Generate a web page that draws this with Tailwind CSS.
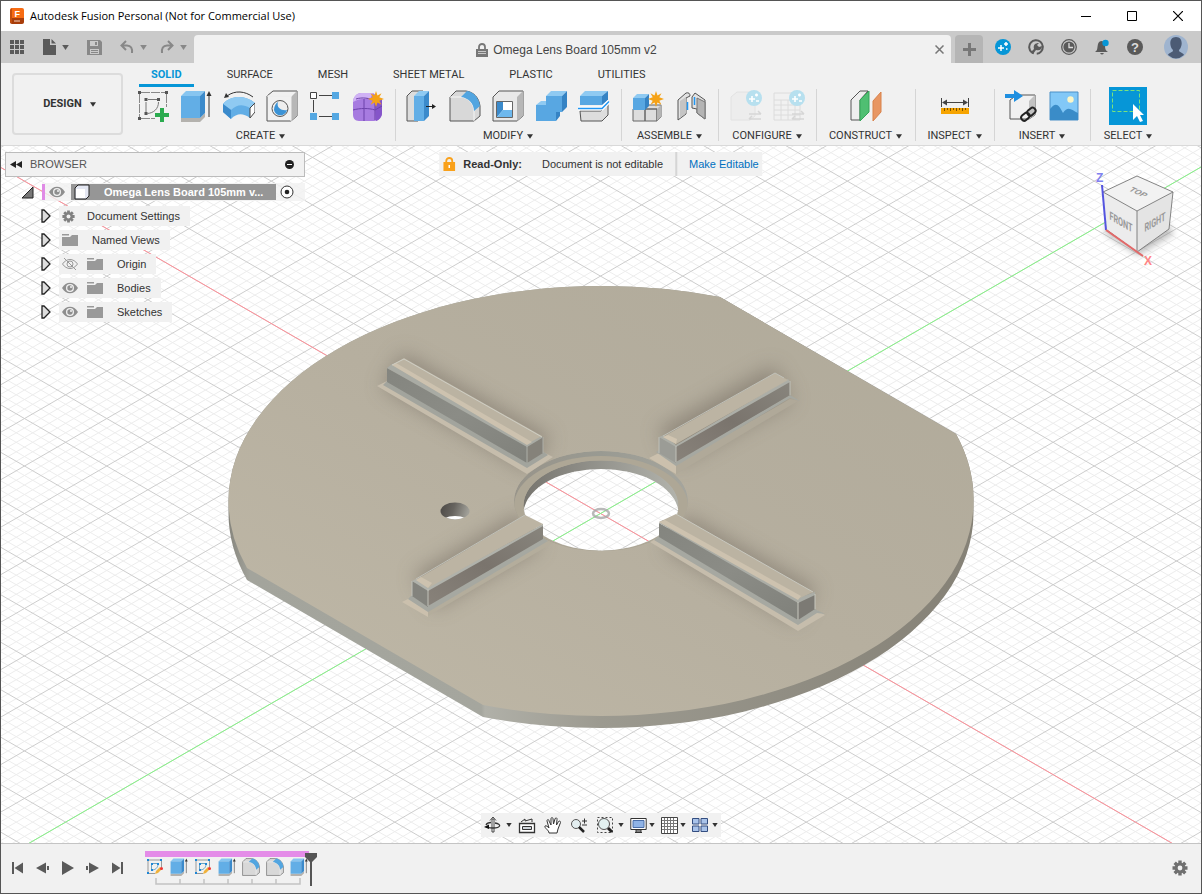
<!DOCTYPE html>
<html lang="en">
<head>
    <meta charset="UTF-8">
    <meta name="viewport" content="width=device-width, initial-scale=1.0">
    <title>Autodesk Fusion Personal (Not for Commercial Use)</title>
    <script src="https://cdn.jsdelivr.net/npm/@tailwindcss/browser@4"></script>
    <style>
        body { font-family: 'Liberation Sans', Arial, sans-serif; }
    </style>
</head>
<body class="h-screen flex flex-col overflow-hidden border border-[#555] bg-[#f1f1f1] text-[11px] text-[#333]">

    <!-- Shared icons -->
    <svg class="hidden">
        <defs>
            <linearGradient id="gBox" x1="0" y1="0" x2="1" y2="1"><stop offset="0" stop-color="#f4f4f4"/><stop offset="1" stop-color="#bdbdbd"/></linearGradient>
            <symbol id="caret" viewBox="0 0 8 6"><path d="M0 0h8L4 6z" fill="currentColor"/></symbol>
            <symbol id="star" viewBox="0 0 16 16"><path d="M8 0l1.500 4.500 4-2.200-2.200 4L16 8l-4.700 1.700 2.200 4-4-2.200L8 16l-1.500-4.500-4 2.200 2.200-4L0 8l4.700-1.700-2.200-4 4 2.200z" fill="#f5a216"/></symbol>
            <symbol id="extrude" viewBox="0 0 32 32">
                <path d="M1 28h19l5-5v4l-5 5H1z" fill="#b4b2ae"/>
                <path d="M1 6l5-5h19l-5 5z" fill="#87c5f0"/><path d="M1 6h19v22H1z" fill="#62aee6"/><path d="M20 6l5-5v22l-5 5z" fill="#3b8acb"/>
                <path d="M29 27V4" stroke="#333"/><path d="M26.500 6L29 1l2.500 5z" fill="#333"/>
            </symbol>
            <symbol id="sketch" viewBox="0 0 32 32">
                <path d="M2.500 4v23M4 2.500h24M4 28.500h14M29.500 4v13" stroke="#888" stroke-dasharray="9 1" fill="none"/>
                <path d="M9 12v11M11 9.500h9M21.500 12c0 7-5 11-11 11.500" stroke="#777" fill="none"/>
                <path d="M1 1h3v3H1zM28 1h3v3h-3zM1 27h3v3H1zM7.500 8h3v3h-3zM20 8h3v3h-3zM7.500 22h3v3h-3z" fill="#555"/>
            </symbol>
            <symbol id="fillet" viewBox="0 0 32 32">
                <path d="M1 7l6-6h10c8 1 13 7 14 15v10l-6 5H1z" fill="#d8d8d8" stroke="#555"/>
                <path d="M1 7h11c8 1 13 7 13 15v9" fill="none" stroke="#f6f6f6"/>
                <path d="M12 7l6-6c7 1 12 7 13 15l-6 5c0-7-5-13-13-14z" fill="#52a5e0"/>
            </symbol>
            <symbol id="eye" viewBox="0 0 16 12"><path d="M0 6c4-7 12-7 16 0-4 7-12 7-16 0z" fill="#8e8e8e"/><circle cx="8" cy="6" r="4" fill="#f1f1f1"/><circle cx="8" cy="6" r="2.700" fill="#8e8e8e"/><circle cx="9" cy="5" r="1" fill="#f1f1f1"/></symbol>
            <symbol id="folder" viewBox="0 0 16 14"><path d="M0 1h7v1.500H0zM0 4h8l2-2h6v11H0z" fill="#999"/></symbol>
            <symbol id="twisty" viewBox="0 0 10 14"><path d="M1 1h2l6 6-6 6H1z" fill="#ddd" stroke="#222" stroke-width="1.300"/></symbol>
            <symbol id="gear" viewBox="0 0 16 16"><g stroke="currentColor" stroke-width="3.400"><path d="M8 .5v15M.5 8h15M2.700 2.700l10.600 10.600M13.300 2.700L2.700 13.300"/></g><circle cx="8" cy="8" r="5.400" fill="currentColor"/><circle cx="8" cy="8" r="2.400" fill="#f1f1f1"/></symbol>
            <symbol id="table" viewBox="0 0 32 32">
                <path d="M1 3h26v27H1zM1 10h26M1 15h26M1 20h26M1 25h26M8 10v20M15 10v20M22 10v20" fill="none" stroke="#dcdcdc"/>
            </symbol>
            <symbol id="config" viewBox="0 0 32 32"><circle cx="24" cy="8" r="8" fill="#b7e0ef"/><path d="M19 9h6M22 6v6M25 5h3M26.500 3.500v3M26 11h3" stroke="#fff" stroke-width="1.600"/><path d="M19 24h12m-3-3l3 3M31 29H19m3-3l-3 3" stroke="#d6d6d6" fill="none" stroke-width="1.500"/></symbol>
            <symbol id="skSmall" viewBox="0 0 18 18"><path d="M3 2h12M2 3v12M3 15.500h6M15.500 3v6" stroke="#999"/><path d="M5.500 6v6M6 5.500h6M12 6c0 4-3 6-6 6" fill="none" stroke="#6aa3c4"/><path d="M1 1h2v2H1zM14 1h2v2h-2zM1 14h2v2H1zM5 5h2v2H5zM11 5h2v2h-2zM5 11h2v2H5z" fill="#1d86d6"/><path d="M9 16l1-3 4-4 2 2-4 4z" fill="#f0b23c"/><circle cx="15.500" cy="10.500" r="1.500" fill="#e33"/></symbol>
        </defs>
    </svg>

    <!-- Title bar -->
    <header class="flex h-[30px] shrink-0 items-center bg-white pl-2 text-black">
        <svg class="size-4" viewBox="0 0 16 16"><rect x="1" width="14" height="15" rx="2" fill="#f76b12"/><path d="M1 10h14v4q0 2-2 2H3q-2 0-2-2z" fill="#a83d0a"/><path d="M1 2l2-2v15l-2-1z" fill="#c44e0c"/><text x="5.500" y="9" font-size="9" font-weight="bold" fill="#fff">F</text><path d="M5 13h6" stroke="#f3d5c2"/></svg>
        <h1 class="ml-[5px] flex-1 font-['Open_Sans'] text-[11px]">Autodesk Fusion Personal (Not for Commercial Use)</h1>
        <button class="flex h-full w-[46px] items-center justify-center" aria-label="Minimize"><svg class="size-[10px]" viewBox="0 0 10 10"><path d="M0 5.500h10" stroke="#000"/></svg></button>
        <button class="flex h-full w-[46px] items-center justify-center" aria-label="Maximize"><svg class="size-[10px]" viewBox="0 0 10 10"><path d="M.5.5h9v9h-9z" fill="none" stroke="#000"/></svg></button>
        <button class="flex h-full w-[46px] items-center justify-center" aria-label="Close"><svg class="size-[10px]" viewBox="0 0 10 10"><path d="M0 0l10 10M10 0L0 10" stroke="#000" stroke-width="1.200"/></svg></button>
    </header>

    <!-- Quick access and document tab -->
    <div class="flex h-8 shrink-0 items-end bg-[#cacaca] text-[#5a5a5a]">
        <div class="flex h-full w-[193px] items-center pl-[9px]">
            <button aria-label="Data panel"><svg class="size-[14px]" viewBox="0 0 14 14"><path d="M0 0h4v4H0zM5 0h4v4H5zM10 0h4v4h-4zM0 5h4v4H0zM5 5h4v4H5zM10 5h4v4h-4zM0 10h4v4H0zM5 10h4v4H5zM10 10h4v4h-4z" fill="currentColor"/></svg></button>
            <button class="ml-[18px] flex items-center gap-1.5" aria-label="File"><svg class="h-4 w-[14px]" viewBox="0 0 14 16"><path d="M1 0h7v6h6v10H1zM9.500 0L14 4.500H9.500z" fill="currentColor"/></svg><svg class="h-[5px] w-[7px]"><use href="#caret"/></svg></button>
            <button class="ml-[18px] text-[#888]" aria-label="Save"><svg class="size-[15px]" viewBox="0 0 15 15"><path d="M0 0h13l2 2v13H0z" fill="currentColor"/><path d="M3 1h8v5H3zM3 9h9v5H3z" fill="#cacaca"/><path d="M8 2h2v3H8zM4 10h7v1H4zM4 12h7v1H4z" fill="currentColor"/></svg></button>
            <button class="ml-[18px] flex items-center gap-1.5 text-[#888]" aria-label="Undo"><svg class="h-[14px] w-[14px]" viewBox="0 0 14 14"><path d="M2 5.500h5c4 0 5.500 3 5 7.500M6 1L1.500 5.500 6 10" fill="none" stroke="currentColor" stroke-width="2"/></svg><svg class="h-[5px] w-[7px]"><use href="#caret"/></svg></button>
            <button class="ml-[13px] flex items-center gap-1.5 text-[#888]" aria-label="Redo"><svg class="h-[14px] w-[14px]" viewBox="0 0 14 14"><path d="M12 5.500H7c-4 0-5.500 3-5 7.500M8 1l4.500 4.500L8 10" fill="none" stroke="currentColor" stroke-width="2"/></svg><svg class="h-[5px] w-[7px]"><use href="#caret"/></svg></button>
        </div>
        <div class="flex h-7 flex-1 items-center rounded-t bg-[#f1f1f1] pl-1 pt-px text-[#444]">
            <div class="flex flex-1 items-center justify-center gap-[5px] text-[12px]">
                <svg class="h-[14px] w-3" viewBox="0 0 12 14"><path d="M3 6V4c0-4 6-4 6 0v2" fill="none" stroke="#777" stroke-width="1.800"/><path d="M0 6h12v8H0z" fill="#777"/><path d="M2 8.500h8M2 10.500h8" stroke="#ddd" stroke-width=".8"/></svg>
                <span>Omega Lens Board 105mm v2</span>
            </div>
            <button class="mr-[7px]" aria-label="Close document"><svg class="size-[9px]" viewBox="0 0 9 9"><path d="M.5.5l8 8M8.500.5l-8 8" stroke="#777" stroke-width="1.500"/></svg></button>
        </div>
        <button class="ml-1 flex h-7 w-7 items-center justify-center rounded-t bg-[#b5b5b5]" aria-label="New tab"><svg class="size-[13px]" viewBox="0 0 13 13"><path d="M6.500 0v13M0 6.500h13" stroke="#777" stroke-width="3"/></svg></button>
        <div class="flex h-full items-center gap-[17px] pl-3 pr-[13px]">
            <button aria-label="Extensions"><svg class="size-4" viewBox="0 0 16 16"><circle cx="8" cy="8" r="8" fill="#0696d7"/><path d="M3 9h6M6 6v6M9 5h4M11 3v4M11 10h1.500" stroke="#fff" stroke-width="1.500"/></svg></button>
            <button aria-label="Job status"><svg class="size-4" viewBox="0 0 16 16"><circle cx="8" cy="8" r="6.800" fill="none" stroke="currentColor" stroke-width="2" stroke-dasharray="37 3" transform="rotate(130 8 8)"/><path d="M3 13l3-3c-1-4 1-6 5-6L9 6l2 2 3-1c0 4-3 5-6 4l-3 4z" fill="currentColor"/></svg></button>
            <button aria-label="Updates"><svg class="size-4" viewBox="0 0 16 16"><circle cx="8" cy="8" r="7.300" fill="none" stroke="currentColor" stroke-width="1.300"/><circle cx="8" cy="8" r="5.600" fill="currentColor"/><path d="M8 4v4.500h4" fill="none" stroke="#ddd" stroke-width="1.300"/></svg></button>
            <button aria-label="Notifications"><svg class="size-4" viewBox="0 0 16 16"><path d="M1 13c3-2 2-4 3-8 1-4 6-4 7 0 0 4 0 6 3 8zM6 14h4q-2 3-4 0z" fill="currentColor"/><circle cx="11.500" cy="4" r="3.200" fill="#0696d7"/></svg></button>
            <button aria-label="Help"><svg class="size-4" viewBox="0 0 16 16"><circle cx="8" cy="8" r="8" fill="currentColor"/><text x="8" y="12.500" text-anchor="middle" font-size="13" font-weight="bold" fill="#ddd">?</text></svg></button>
            <button class="ml-1" aria-label="Account"><svg class="size-6" viewBox="0 0 24 24"><circle cx="12" cy="12" r="12" fill="#9fb4cf"/><path d="M4 20c1-3 5-2 5-5-4-4-4-13 3-13s7 9 3 13c0 3 4 2 5 5q-8 7-16 0z" fill="#4c5b74"/></svg></button>
        </div>
    </div>

    <!-- Ribbon -->
    <div class="flex h-[83px] shrink-0 border-b border-[#d9d9d9] font-['Roboto'] text-[11px]">
        <button class="ml-[11px] mt-[10px] flex h-[62px] w-[111px] items-center justify-center gap-2 rounded border-2 border-[#dcdcdc] pl-1 font-bold">DESIGN <svg class="h-[5px] w-1.5"><use href="#caret"/></svg></button>
        <div class="ml-[10px] flex-1">
            <nav class="flex h-6 gap-[21px] pl-[6px]">
                <button class="border-b-[3px] border-[#0696d7] px-3 pt-[3px] font-bold text-[#0696d7]">SOLID</button>
                <button class="border-b-[3px] border-transparent px-3 pt-[3px]">SURFACE</button>
                <button class="border-b-[3px] border-transparent px-3 pt-[3px]">MESH</button>
                <button class="border-b-[3px] border-transparent px-3 pt-[3px]">SHEET METAL</button>
                <button class="border-b-[3px] border-transparent px-3 pt-[3px]">PLASTIC</button>
                <button class="border-b-[3px] border-transparent px-3 pt-[3px]">UTILITIES</button>
            </nav>
            <div class="flex">
                <section class="w-[262px]">
                    <div class="flex h-[38px] items-center justify-center gap-[11px] pr-[7px]">
                        <button aria-label="Create sketch"><svg class="size-8" viewBox="0 0 32 32"><use href="#sketch"/><path d="M23 18h4v5h5v4h-5v5h-4v-5h-5v-4h5z" fill="#2bab4f"/></svg></button>
                        <button aria-label="Extrude"><svg class="size-8"><use href="#extrude"/></svg></button>
                        <button aria-label="Revolve"><svg class="size-8" viewBox="0 0 32 32"><path d="M0 14c8-9 22-9 32-1l-5 6v9c-7-5-13-5-19 1l-8-7z" fill="#62aee6"/><path d="M0 14c8-9 22-9 32-1l-5 5c-7-4-13-4-19 2z" fill="#8fcaf2"/><path d="M8 20v9l-8-7v-8z" fill="#3b8acb"/><path d="M27 18l5-5v9l-5 6z" fill="#fff" stroke="#444"/><path d="M4 6c8-6 18-5 26 1" fill="none" stroke="#333"/><path d="M1 8l2-5 3 4z" fill="#333"/></svg></button>
                        <button aria-label="Hole"><svg class="size-8" viewBox="0 0 32 32"><path d="M1 6l6-5h24v25l-6 5H1z" fill="url(#gBox)" stroke="#555"/><path d="M25 7l6-6v25l-6 5z" fill="#b7b7b7"/><path d="M1 6h24v25" fill="none" stroke="#eee"/><circle cx="14" cy="18.500" r="8" fill="#eee" stroke="#555"/><path d="M12 12c-2 6 4 9 9 8-1 6-11 8-13 0 0-4 2-7 4-8z" fill="#3b93d6"/></svg></button>
                        <button aria-label="Rectangular pattern"><svg class="size-8" viewBox="0 0 32 32"><path d="M10 5.500h13M4.500 10v12M10 26.500h13" stroke="#444"/><path d="M1.500 2.500h6v6h-6z" fill="#fff" stroke="#444"/><path d="M23 2h7v7h-7zM1 23h7v7H1zM23 23h7v7h-7z" fill="#55a8e2"/></svg></button>
                        <button aria-label="Create form"><svg class="size-8" viewBox="0 0 32 32"><path d="M1 12c0-5 4-9 8-9h12l9 7v13c0 4-4 8-8 8H7c-4 0-6-3-6-6z" fill="#a77be0"/><path d="M1 12c0-5 4-9 8-9h12l-3 6c-6-1-13 0-17 3z" fill="#d0b2f5"/><path d="M23 12l7-3v14c0 3-2 7-6 8z" fill="#8555c9"/><path d="M1 20c7-2 16-2 22 0l7-4M12 9v22M23 11v19M4 9c6-2 14-1 19 2" fill="none" stroke="#6d42ab"/><use href="#star" x="16" y="1" width="16" height="16"/></svg></button>
                    </div>
                    <button class="flex h-[21px] w-full items-center justify-center gap-1 pr-[7px] pt-px">CREATE <svg class="h-[5px] w-1.5"><use href="#caret"/></svg></button>
                </section>
                <section class="relative w-[226px]">
                    <span class="absolute left-0 top-0.5 h-[52px] w-px bg-[#d5d5d5]"></span>
                    <div class="flex h-[38px] items-center justify-center gap-[11px]">
                        <button aria-label="Press pull"><svg class="size-8" viewBox="0 0 32 32"><path d="M1 6l5-5h11v25l-5 5H1z" fill="#ddd" stroke="#555"/><path d="M8 6h10v25H8z" fill="#62aee6"/><path d="M8 6l5-5h10l-5 5z" fill="#8fcaf2"/><path d="M18 6l5-5v25l-5 5z" fill="#3b8acb"/><path d="M20 16.500h8" stroke="#222"/><path d="M26 14l4 2.500-4 2.500z" fill="#222"/></svg></button>
                        <button aria-label="Fillet"><svg class="size-8"><use href="#fillet"/></svg></button>
                        <button aria-label="Shell"><svg class="size-8" viewBox="0 0 32 32"><path d="M1 7l6-6h24v25l-6 5H1z" fill="#e8e8e8" stroke="#555"/><path d="M25 7l6-6v25l-6 5z" fill="#b7b7b7"/><path d="M4.500 11.500h16v16h-16z" fill="#fff" stroke="#666"/><path d="M5 12h6v8l-6 7z" fill="#3b8acb"/><path d="M5 27l6-7h9v7z" fill="#6db8ed"/></svg></button>
                        <button aria-label="Combine"><svg class="size-8" viewBox="0 0 32 32"><path d="M1 15h10V6h16v16h-6v9H1z" fill="#58a7e2"/><path d="M1 15l5-4h5v4zM11 6l5-5h16l-5 5z" fill="#8fcaf2"/><path d="M27 6l5-5v16l-5 5zM21 22h4v4l-4 5z" fill="#3583c4"/></svg></button>
                        <button aria-label="Split body"><svg class="size-8" viewBox="0 0 32 32"><path d="M2 21h21l7-7v11l-6 6H3z" fill="#ddd" stroke="#555"/><path d="M2 6h22v9H2z" fill="#58a7e2"/><path d="M2 6l5-5h23l-6 5z" fill="#8fcaf2"/><path d="M24 6l6-5v9l-6 5z" fill="#3583c4"/><path d="M0 18.500h24l7-7" fill="none" stroke="#fff" stroke-width="4"/><path d="M0 18.500h24l7-7" fill="none" stroke="#2196f3" stroke-width="1.500"/></svg></button>
                    </div>
                    <button class="flex h-[21px] w-full items-center justify-center gap-1 pt-px">MODIFY <svg class="h-[5px] w-1.5"><use href="#caret"/></svg></button>
                </section>
                <section class="relative w-[97px]">
                    <span class="absolute left-0 top-0.5 h-[52px] w-px bg-[#d5d5d5]"></span>
                    <div class="flex h-[38px] items-center justify-center gap-[11px]">
                        <button aria-label="New component"><svg class="size-8" viewBox="0 0 32 32"><path d="M1 19h12v12H1zM13 19h12v12H13zM13 19l4-4h12v12l-4 4V19z" fill="#ddd" stroke="#666"/><path d="M25 19l4-4v12l-4 4z" fill="#b5b5b5"/><path d="M1 8h12v12H1z" fill="#58a7e2"/><path d="M1 8l4-4h12l-4 4z" fill="#8fcaf2"/><path d="M13 8l4-4v12l-4 4z" fill="#3583c4"/><use href="#star" x="16" y="1" width="16" height="16"/></svg></button>
                        <button aria-label="Joint"><svg class="size-8" viewBox="0 0 32 32"><path d="M3 10l8-7q4-1 4 3l-4 2v16l-8 6z" fill="#e2e2e2" stroke="#555"/><path d="M5 11l6-4v16l-6 5z" fill="#c4c4c4"/><path d="M17 7l3-4 10 7v19l-8-6v-4l-5-1z" fill="#e2e2e2" stroke="#555"/><path d="M22 8l8 4v17l-8-6z" fill="#b4b4b4" stroke="#777"/><path d="M12.500 12v8M19.500 7v8" stroke="#2196f3" stroke-width="1.500"/></svg></button>
                    </div>
                    <button class="flex h-[21px] w-full items-center justify-center gap-1 pt-px">ASSEMBLE <svg class="h-[5px] w-1.5"><use href="#caret"/></svg></button>
                </section>
                <section class="relative w-[98px]">
                    <span class="absolute left-0 top-0.5 h-[52px] w-px bg-[#d5d5d5]"></span>
                    <div class="flex h-[38px] items-center justify-center gap-[11px]">
                        <button aria-label="Create configuration"><svg class="size-8" viewBox="0 0 32 32"><path d="M1 7l6-5h18v24l-5 4H1z" fill="#ededed" stroke="#e2e2e2"/><use href="#config"/></svg></button>
                        <button aria-label="Configuration table"><svg class="size-8" viewBox="0 0 32 32"><use href="#table"/><use href="#config"/></svg></button>
                    </div>
                    <button class="flex h-[21px] w-full items-center justify-center gap-1 pt-px">CONFIGURE <svg class="h-[5px] w-1.5"><use href="#caret"/></svg></button>
                </section>
                <section class="relative w-[99px]">
                    <span class="absolute left-0 top-0.5 h-[52px] w-px bg-[#d5d5d5]"></span>
                    <div class="flex h-[38px] items-center justify-center">
                        <button aria-label="Offset plane"><svg class="size-8" viewBox="0 0 32 32"><path d="M1 10l9-9h8l-8 9v20H1z" fill="#eee" stroke="#555"/><path d="M10 10l9-9v21l-9 9z" fill="#4fbf72" stroke="#35a559"/><path d="M23 11l8-9v20l-8 9z" fill="#e89663" stroke="#d9824b"/></svg></button>
                    </div>
                    <button class="flex h-[21px] w-full items-center justify-center gap-1 pt-px">CONSTRUCT <svg class="h-[5px] w-1.5"><use href="#caret"/></svg></button>
                </section>
                <section class="relative w-[79px]">
                    <span class="absolute left-0 top-0.5 h-[52px] w-px bg-[#d5d5d5]"></span>
                    <div class="flex h-[38px] items-center justify-center">
                        <button aria-label="Measure"><svg class="size-8" viewBox="0 0 32 32"><path d="M2.500 8v9M29.500 8v9M5 12.500h22" stroke="#444"/><path d="M3 12.500l5-3v6zM29 12.500l-5-3v6z" fill="#444"/><path d="M2 18h28v6H2z" fill="#f6a400"/><path d="M5.500 18v3M8.500 18v2M11.500 18v3M14.500 18v2M17.500 18v3M20.500 18v2M23.500 18v3M26.500 18v2" stroke="#7d5200"/></svg></button>
                    </div>
                    <button class="flex h-[21px] w-full items-center justify-center gap-1 pt-px">INSPECT <svg class="h-[5px] w-1.5"><use href="#caret"/></svg></button>
                </section>
                <section class="relative w-[96px]">
                    <span class="absolute left-0 top-0.5 h-[52px] w-px bg-[#d5d5d5]"></span>
                    <div class="flex h-[38px] items-center justify-center gap-[11px]">
                        <button aria-label="Insert derive"><svg class="size-8" viewBox="0 0 32 32"><path d="M5 10l7-5h18v20l-6 4H5z" fill="url(#gBox)" stroke="#555"/><path d="M24 11l6-6v20l-6 4z" fill="#c2c2c2"/><path d="M0 4h9V0l9 6-9 6V8H0z" fill="#1f8fe0"/><g fill="none" stroke="#222" stroke-width="2"><rect x="16" y="24" width="9" height="6" rx="3" transform="rotate(-40 20 27)"/><rect x="22" y="19" width="9" height="6" rx="3" transform="rotate(-40 26 22)"/></g></svg></button>
                        <button aria-label="Canvas"><svg class="size-8" viewBox="0 0 32 32"><path d="M2 2h28v28H2z" fill="#82c8f7" stroke="#4a90c7"/><circle cx="22.500" cy="9.500" r="3.200" fill="#fbf6c8"/><path d="M2 19c6-8 9-4 13 4 5-8 9-3 15 0v7H2z" fill="#3a8cc8"/></svg></button>
                    </div>
                    <button class="flex h-[21px] w-full items-center justify-center gap-1 pt-px">INSERT <svg class="h-[5px] w-1.5"><use href="#caret"/></svg></button>
                </section>
                <section class="relative w-[76px]">
                    <span class="absolute left-0 top-0.5 h-[52px] w-px bg-[#d5d5d5]"></span>
                    <div class="flex h-[38px] items-center justify-center">
                        <button aria-label="Select"><svg class="size-[38px]" viewBox="0 0 38 38"><path d="M0 0h38v38H0z" fill="#0696d7"/><path d="M3.500 3.500h27v21h-27z" fill="none" stroke="#79e27d" stroke-dasharray="4 2"/><path d="M24 17v16l4-4 3 6 3-1-3-6h4z" fill="#fff"/></svg></button>
                    </div>
                    <button class="flex h-[21px] w-full items-center justify-center gap-1 pt-px">SELECT <svg class="h-[5px] w-1.5"><use href="#caret"/></svg></button>
                </section>
            </div>
        </div>
    </div>

    <!-- Canvas -->
    <main class="relative min-h-0 flex-1 overflow-hidden bg-white">
        <svg class="absolute inset-0 size-full" viewBox="1 146 1200 697" preserveAspectRatio="xMidYMid slice">
            <defs>
                <linearGradient id="gTop" x1="0" y1="1" x2="1" y2="0"><stop offset="0" stop-color="#bfb8a7"/><stop offset=".5" stop-color="#b6af9f"/><stop offset="1" stop-color="#b0aa9a"/></linearGradient>
                <linearGradient id="gRim" x1="228" x2="973" y1="0" y2="0" gradientUnits="userSpaceOnUse"><stop offset="0" stop-color="#85847c"/><stop offset=".03" stop-color="#a3a49c"/><stop offset=".34" stop-color="#a5a69e"/><stop offset=".345" stop-color="#b0b0a8"/><stop offset=".5" stop-color="#9c9a90"/><stop offset="1" stop-color="#858176"/></linearGradient>
                <linearGradient id="gDark" x1="0" x2="1" y1="0" y2="0"><stop offset="0" stop-color="#77756f"/><stop offset="1" stop-color="#b2b3ac"/></linearGradient>
                <linearGradient id="gPin" x1="0" x2="1" y1="0" y2=".2"><stop offset="0" stop-color="#4a4744"/><stop offset=".5" stop-color="#67645f"/><stop offset="1" stop-color="#a09f98"/></linearGradient>
                <linearGradient id="gWall" x1="0" x2="1" y1="0" y2="0"><stop offset="0" stop-color="#98948a"/><stop offset=".5" stop-color="#999a92"/><stop offset="1" stop-color="#a5a59d"/></linearGradient>
                <linearGradient id="gCool" x1="0" x2="1" y1="0" y2="1"><stop offset="0" stop-color="#84857f"/><stop offset=".5" stop-color="#8b8c86"/><stop offset="1" stop-color="#80817b"/></linearGradient>
                <linearGradient id="gWarm" x1="0" x2="1" y1="1" y2="0"><stop offset="0" stop-color="#88827a"/><stop offset=".5" stop-color="#7a746d"/><stop offset="1" stop-color="#88857d"/></linearGradient>
                <filter id="soft" x="-20%" y="-20%" width="140%" height="140%"><feGaussianBlur stdDeviation="10"/></filter>
                <clipPath id="cOuter"><ellipse cx="601" cy="501" rx="87" ry="50"/></clipPath>
                <clipPath id="cInner" clip-path="url(#cOuter)"><ellipse cx="601" cy="505.500" rx="77.500" ry="45"/></clipPath>
                <clipPath id="cFloor" clip-path="url(#cInner)"><ellipse cx="601" cy="514" rx="77.500" ry="45"/></clipPath>
                <clipPath id="cPin"><ellipse cx="455" cy="511" rx="14.500" ry="8.500"/></clipPath>
                <g id="ground">
                    <path fill="#fff" d="M0 140h1204v710H0z"/>
                    <path class="minor" fill="none" stroke="#ededed"/>
                    <path class="major" fill="none" stroke="#cdcdcd"/>
                    <path d="M0 167l1202 693.500" stroke="#ff8f98"/>
                    <path d="M0 860l1202-693.500" stroke="#86f586"/>
                </g>
            </defs>
            <use href="#ground"/>

            <!-- Board -->
            <path d="M228.500 501A372.500 215 0 0 1 601 286A372.500 215 0 0 1 720 297L956 434A372.500 215 0 0 1 973.500 501v12A372.500 215 0 0 1 601 728A372.500 215 0 0 1 483 717L247 580A372.500 215 0 0 1 228.500 513z" fill="url(#gRim)"/>
            <path d="M228.500 501A372.500 215 0 0 1 601 286A372.500 215 0 0 1 720 297L956 434A372.500 215 0 0 1 973.500 501A372.500 215 0 0 1 601 716A372.500 215 0 0 1 483 705L247 568A372.500 215 0 0 1 228.500 501z" fill="url(#gTop)"/>
            <g filter="url(#soft)" fill="none" stroke="#6b6258" stroke-width="40" opacity=".5">
                <path d="M392 370L540 454M668 447L783 383M424 592L530 530M675 532L806 606"/>
            </g>

            <!-- Bore -->
            <g clip-path="url(#cOuter)">
                <ellipse cx="601" cy="501" rx="87" ry="50" fill="url(#gWall)"/>
                <ellipse cx="601" cy="506" rx="87" ry="50" fill="#aea796"/>
                <g clip-path="url(#cInner)"><ellipse cx="601" cy="505.500" rx="77.500" ry="45" fill="url(#gDark)"/></g>
                <g clip-path="url(#cFloor)">
                    <use href="#ground"/>
                    <ellipse cx="601" cy="513.500" rx="8" ry="4.500" fill="none" stroke="#a8a8a8" stroke-width="2.500" opacity=".8"/>
                </g>
            </g>

            <!-- Pin hole -->
            <g clip-path="url(#cPin)"><path d="M440 502h30v19h-30z" fill="url(#gPin)"/><ellipse cx="455" cy="524" rx="15" ry="8" fill="#fff"/></g>

            <!-- Ribs -->
            <g>
                <path d="M377 386l10-5 140 81 18-9 8 4-26 17z" fill="#c6bdac"/>
                <path d="M383 385l4-4 140 80 17-9 4 3-21 13z" fill="#a2a49d"/>
                <path d="M387 368l140 78v17L387 382z" fill="url(#gCool)"/>
                <path d="M527 446l16-9v16l-16 10z" fill="#85827a"/>
                <path d="M387 368l5-4 135 79 15-7v2l-15 9z" fill="#a9aba4"/>
                <path d="M392 365l12-7 138 78-15 8z" fill="#bbb3a2"/>
                <path d="M392 365l4-2 136 79-5 3z" fill="#cdc2af"/>
                <path d="M392 365l12-6 138 78" fill="none" stroke="#cecdc3"/>
                <path d="M527 446v17M543 437v16" stroke="#adafa8"/>
            </g>
            <g>
                <path d="M649 458l10-5 17 10v11z" fill="#cbc0ad"/>
                <path d="M676 464l114-65 8 2-122 73z" fill="#b0a999"/>
                <path d="M656 452l3-2 17 11 114-66 10 6-10-3-114 68z" fill="#a6a8a1"/>
                <path d="M659 437l17 9v17l-17-10z" fill="#9b9c96"/>
                <path d="M676 446l114-65v14l-114 67z" fill="url(#gWarm)"/>
                <path d="M659 437l5-2 12 10 112-66 2 3-114 65z" fill="#acaea7"/>
                <path d="M663 437l112-64 13 7-112 64z" fill="#bcb4a3"/>
                <path d="M663 437l5-2 9 4-1 5z" fill="#d1c5b1"/>
                <path d="M663 436l112-63 9 5M659 437v16M676 446v16M790 381v14" fill="none" stroke="#c0c1b9"/>
            </g>
            <g>
                <path d="M650 542l9-5 139 83 19-10 8 5-27 16z" fill="#c6bdac"/>
                <path d="M654 540l5-4 139 82 17-9 10 5-8-1-19 12z" fill="#a6a8a1"/>
                <path d="M659 523l139 78v19L659 537z" fill="url(#gCool)"/>
                <path d="M798 601l17-8v16l-17 11z" fill="#7c7a74"/>
                <path d="M659 523l4-3 135 78 17-6v3l-17 8z" fill="#abada6"/>
                <path d="M659 522l17-8 137 78-15 7z" fill="#bbb3a2"/>
                <path d="M659 522l6-2 136 76-3 4z" fill="#cdc2af"/>
                <path d="M676 514l137 78M798 602v18M815 594v15" fill="none" stroke="#c8c8bf"/>
            </g>
            <g>
                <path d="M402 602l10-5 16 10v10z" fill="#cbc0ad"/>
                <path d="M428 607l116-68 9 4-125 73z" fill="#b4ad9c"/>
                <path d="M408 599l4-4 16 10 115-67 5 3-120 71z" fill="#a6a8a1"/>
                <path d="M412 581l16 8v18l-16-11z" fill="#83837d"/>
                <path d="M428 589l115-65v15l-115 67z" fill="url(#gWarm)"/>
                <path d="M412 581l4-2 12 8 115-63v2l-115 65z" fill="#b0b2ab"/>
                <path d="M416 580l109-65 18 9-115 64z" fill="#bcb4a3"/>
                <path d="M416 580l5-3 11 6-4 5z" fill="#cdc2af"/>
                <path d="M416 579l109-64M412 581v15M428 589v17" fill="none" stroke="#c0c1b9"/>
            </g>
        </svg>

        <!-- Browser -->
        <aside class="absolute left-1 top-1.5 w-[300px]">
            <div class="flex h-[25px] items-center border border-[#bcbcbc] bg-[#f1f1f1] px-1 text-[#555]">
                <button aria-label="Collapse"><svg class="h-[7px] w-3" viewBox="0 0 12 7"><path d="M6 0v7L0 3.500zM12 0v7L6 3.500z" fill="#222"/></svg></button>
                <h2 class="ml-2 flex-1">BROWSER</h2>
                <button class="mr-1.5" aria-label="Options"><svg class="size-[9px]" viewBox="0 0 9 9"><circle cx="4.500" cy="4.500" r="4.500" fill="#222"/><path d="M2 4.500h5" stroke="#fff"/></svg></button>
            </div>
            <ul class="mt-[3px]">
                <li class="flex h-6 items-center">
                    <svg class="ml-4 size-[13px]" viewBox="0 0 13 13"><path d="M1 12L12 1v11z" fill="#777" stroke="#222"/></svg>
                    <div class="ml-2 flex h-[18px] flex-1 items-center bg-[#f1f1f1]/80">
                        <span class="h-4 w-[3px] bg-[#e08be6]"></span>
                        <svg class="ml-1 h-3 w-4"><use href="#eye"/></svg>
                        <div class="ml-1.5 flex h-4 w-[205px] items-center bg-[#969696] font-bold text-white">
                            <svg class="ml-[3px] size-4" viewBox="0 0 16 16"><path d="M1 4l3-3h11v11l-3 3H1z" fill="#e4e7f2" stroke="#222"/><path d="M2 5h9v9H2z" fill="#fff"/></svg>
                            <span class="ml-[14px] whitespace-nowrap">Omega Lens Board 105mm v...</span>
                        </div>
                        <svg class="ml-1 size-[14px]" viewBox="0 0 14 14"><circle cx="7" cy="7" r="6" fill="#fff" stroke="#333"/><circle cx="7" cy="7" r="2.300" fill="#222"/></svg>
                    </div>
                </li>
                <li class="flex h-6 items-center"><svg class="ml-9 h-[14px] w-[10px]"><use href="#twisty"/></svg><span class="ml-2 flex h-5 items-center bg-[#f1f1f1] pl-[3px] pr-[10px]"><svg class="size-[13px] text-[#808080]"><use href="#gear"/></svg><span class="ml-3">Document Settings</span></span></li>
                <li class="flex h-6 items-center"><svg class="ml-9 h-[14px] w-[10px]"><use href="#twisty"/></svg><span class="ml-2 flex h-5 items-center bg-[#f1f1f1] pl-[3px] pr-[10px]"><svg class="h-[14px] w-4"><use href="#folder"/></svg><span class="ml-[14px]">Named Views</span></span></li>
                <li class="flex h-6 items-center"><svg class="ml-9 h-[14px] w-[10px]"><use href="#twisty"/></svg><span class="ml-2 flex h-5 items-center bg-[#f1f1f1] pl-[3px] pr-[10px]"><svg class="h-3 w-4" viewBox="0 0 16 12"><path d="M.5 6c4-6 11-6 15 0-4 6-11 6-15 0zM2 0l12 12" fill="none" stroke="#999"/><circle cx="8" cy="6" r="3" fill="none" stroke="#999"/></svg><svg class="ml-[9px] h-[14px] w-4"><use href="#folder"/></svg><span class="ml-[14px]">Origin</span></span></li>
                <li class="flex h-6 items-center"><svg class="ml-9 h-[14px] w-[10px]"><use href="#twisty"/></svg><span class="ml-2 flex h-5 items-center bg-[#f1f1f1] pl-[3px] pr-[10px]"><svg class="h-3 w-4"><use href="#eye"/></svg><svg class="ml-[9px] h-[14px] w-4"><use href="#folder"/></svg><span class="ml-[14px]">Bodies</span></span></li>
                <li class="flex h-6 items-center"><svg class="ml-9 h-[14px] w-[10px]"><use href="#twisty"/></svg><span class="ml-2 flex h-5 items-center bg-[#f1f1f1] pl-[3px] pr-[10px]"><svg class="h-3 w-4"><use href="#eye"/></svg><svg class="ml-[9px] h-[14px] w-4"><use href="#folder"/></svg><span class="ml-[14px]">Sketches</span></span></li>
            </ul>
        </aside>

        <!-- Read-only notice -->
        <div class="absolute left-1/2 top-1.5 flex h-6 -translate-x-1/2 items-center whitespace-nowrap bg-[#f1f1f1] px-1">
            <svg class="h-[14px] w-3" viewBox="0 0 12 14"><path d="M3 6V4c0-4 6-4 6 0v2" fill="none" stroke="#f9a11b" stroke-width="1.800"/><path d="M0 5h12v9H0z" fill="#f9a11b"/><path d="M6 8v3" stroke="#fff" stroke-width="1.500"/></svg>
            <strong class="ml-2">Read-Only:</strong>
            <span class="ml-5">Document is not editable</span>
            <span class="ml-3 h-full w-0.5 bg-[#d5d5d5]"></span>
            <a href="#" class="ml-3 text-[#0070c0]">Make Editable</a>
        </div>

        <!-- View cube -->
        <svg class="absolute right-0 top-5 h-[110px] w-[121px]" viewBox="1080 166 121 110">
            <defs><filter id="cubeShadow"><feGaussianBlur stdDeviation="3"/></filter></defs>
            <path d="M1104 233l34 23 36-22-6-10h-60z" fill="#888" opacity=".5" filter="url(#cubeShadow)"/>
            <path d="M1103 192l34 19v41l-30-22z" fill="#ececec"/>
            <path d="M1137 211l36-19-4 37-32 23z" fill="#e4e4e4"/>
            <path d="M1103 192l34-16 36 16-36 19z" fill="#f2f2f2"/>
            <path d="M1103 192l34-16 36 16-36 19zM1137 211v41l32-23 4-37M1107 230l30 22" fill="none" stroke="#777" stroke-width=".9"/>
            <g fill="#999" font-family="Roboto" font-weight="bold" text-anchor="middle">
                <text font-size="11" transform="matrix(.75 .36 -.6 .45 1136 194)">TOP</text>
                <text font-size="11" transform="matrix(.66 .38 0 1.050 1121 226)">FRONT</text>
                <text font-size="11" transform="matrix(.66 -.38 0 1.050 1155 226)">RIGHT</text>
            </g>
            <path d="M1102 185l4 45" stroke="#5454e0" stroke-width="2"/>
            <path d="M1106 230l37 26" stroke="#e26969" stroke-width="2"/>
            <text x="1096" y="182" font-size="12" font-weight="bold" fill="#8080f0">Z</text>
            <text x="1144" y="265" font-size="12" font-weight="bold" fill="#ff8585">X</text>
        </svg>

        <!-- Navigation bar -->
        <div class="absolute bottom-[6px] left-1/2 flex h-6 -translate-x-1/2 items-center bg-[#f1f1f1] px-[3px] text-[#333]">
            <button class="flex items-center gap-1" aria-label="Orbit"><svg class="size-[18px]" viewBox="0 0 18 18"><path d="M8 3h2v13H8zM6 4.500L9 1l3 3.500" fill="#fff" stroke="#444"/><path d="M11 7c7 1 6 5-2 5-3 0-6-.5-7-1.500M2 9c1-2 3-2.500 5-2.500" fill="none" stroke="#333" stroke-width="1.300"/><path d="M0 11l5-2.500V13z" fill="#111"/></svg><svg class="h-1 w-1.5"><use href="#caret"/></svg></button>
            <button class="ml-1.5" aria-label="Look at"><svg class="h-[17px] w-[18px]" viewBox="0 0 18 17"><path d="M1.500 6.500h15v9h-15z" fill="#fff" stroke="#333" stroke-width="1.300"/><path d="M4.500 9.500h9v3h-9z" fill="#cfd4da" stroke="#333"/><path d="M3 5l4-3v2l7-2v3" fill="none" stroke="#333"/></svg></button>
            <button class="ml-2" aria-label="Pan"><svg class="size-[18px]" viewBox="0 0 18 18"><path d="M5 17c0-3-5-5-4-7 1-1 3 1 4 2L3 5c0-2 2-2 2 0l2 4V3c0-2 2-2 2 0l.500 5L11 3c.5-2 2.500-1 2 .5L12.500 9l2-3.500c1-1 2.500 0 2 1L14 13l-1 4z" fill="#fff" stroke="#333"/></svg></button>
            <button class="ml-2" aria-label="Zoom"><svg class="size-[18px]" viewBox="0 0 18 18"><circle cx="6" cy="8" r="4.500" fill="#e3eef0" stroke="#555"/><path d="M9 11l5 5" stroke="#222" stroke-width="2.500"/><path d="M12 5h5M14.500 2.500v5M12 9h5" stroke="#333"/></svg></button>
            <button class="ml-2 flex items-center gap-1" aria-label="Fit"><svg class="size-[18px]" viewBox="0 0 18 18"><path d="M1.500 1.500h15v15h-15z" fill="none" stroke="#444" stroke-dasharray="2 2"/><circle cx="8" cy="8" r="5.500" fill="#e3f2f2" stroke="#555"/><path d="M12 12l4 4" stroke="#222" stroke-width="3"/></svg><svg class="h-1 w-1.5"><use href="#caret"/></svg></button>
            <button class="ml-1.5 flex items-center gap-0.5" aria-label="Display settings"><svg class="h-[17px] w-[17px]" viewBox="0 0 17 17"><path d="M.8 1.500h15.400v11H.8z" fill="#fff" stroke="#333"/><path d="M3 3.500h11v7H3z" fill="#8fb3e6" stroke="#4a6ea8"/><path d="M5 15.500h7M6 13h5v2H6z" fill="#ccc" stroke="#333"/></svg><svg class="h-1 w-1.5"><use href="#caret"/></svg></button>
            <button class="ml-1.5 flex items-center gap-0.5" aria-label="Grid and snaps"><svg class="size-[17px]" viewBox="0 0 17 17"><path d="M.5.5h16v16H.5z" fill="#fff" stroke="#444"/><path d="M3.500 1v15M6.500 1v15M9.500 1v15M12.500 1v15M1 3.500h15M1 6.500h15M1 9.500h15M1 12.500h15" stroke="#777"/></svg><svg class="h-1 w-1.5"><use href="#caret"/></svg></button>
            <button class="ml-1.5 flex items-center gap-1" aria-label="Viewports"><svg class="h-[14px] w-4" viewBox="0 0 16 14"><path d="M.5.5h6.500v5.500H.5zM9 .5h6.500v5.500H9zM.5 8h6.500v5.500H.5zM9 8h6.500v5.500H9z" fill="#a9c3ea" stroke="#334d80"/></svg><svg class="h-1 w-1.5"><use href="#caret"/></svg></button>
        </div>
    </main>

    <!-- Timeline -->
    <footer class="flex h-[50px] shrink-0 items-center border-t border-[#c4c4c4] bg-[#f1f1f1] pb-0.5 pl-[10px] pr-[13px] text-[#5a5a5a]">
        <div class="flex items-center gap-[11px]">
            <button aria-label="Go to start"><svg class="size-[14px]" viewBox="0 0 14 14"><path d="M1 1h2v12H1zM12 1.500v11L3.500 7z" fill="currentColor"/></svg></button>
            <button aria-label="Step back"><svg class="size-[14px]" viewBox="0 0 14 14"><path d="M10 1.500v11L0 7zM11 5h2v4h-2z" fill="currentColor"/></svg></button>
            <button aria-label="Play"><svg class="size-[14px]" viewBox="0 0 14 14"><path d="M1 0v14l12-7z" fill="currentColor"/></svg></button>
            <button aria-label="Step forward"><svg class="size-[14px]" viewBox="0 0 14 14"><path d="M3 1.500v11L13 7zM0 5h2v4H0z" fill="currentColor"/></svg></button>
            <button aria-label="Go to end"><svg class="size-[14px]" viewBox="0 0 14 14"><path d="M10 1h2v12h-2zM1 1.500v11L9.500 7z" fill="currentColor"/></svg></button>
        </div>
        <div class="relative ml-5 h-[34px] w-[164px]">
            <div class="h-[6px] bg-[#e48ce8]"></div>
            <div class="flex gap-1.5 pt-px pl-px">
                <button aria-label="Sketch1"><svg class="size-[18px]"><use href="#skSmall"/></svg></button>
                <button aria-label="Extrude1"><svg class="size-[18px]"><use href="#extrude"/></svg></button>
                <button aria-label="Sketch2"><svg class="size-[18px]"><use href="#skSmall"/></svg></button>
                <button aria-label="Extrude2"><svg class="size-[18px]"><use href="#extrude"/></svg></button>
                <button aria-label="Fillet1"><svg class="size-[18px]"><use href="#fillet"/></svg></button>
                <button aria-label="Fillet2"><svg class="size-[18px]"><use href="#fillet"/></svg></button>
                <button aria-label="Extrude3"><svg class="size-[18px]"><use href="#extrude"/></svg></button>
            </div>
            <svg class="ml-[10px] mt-0.5 h-[7px] w-[146px]" viewBox="0 0 146 7"><path d="M1 0v6h144V0M25 1v5M49 1v5M73 1v5M97 1v5M121 1v5" fill="none" stroke="#c2c2c2" stroke-width="1.500"/></svg>
            <svg class="absolute -right-2 top-0.5 h-[33px] w-3" viewBox="0 0 12 33"><path d="M0 0h12v4L7 9v24H5V9L0 4z" fill="#555"/></svg>
        </div>
        <button class="ml-auto text-[#707070]" aria-label="Timeline settings"><svg class="size-4"><use href="#gear"/></svg></button>
    </footer>

    <script>
        // isometric ground grid, centred on the origin
        const cx = 600.5, cy = 513.5, slope = 0.577, step = 9.496;
        let minor = '', major = '';
        for (let i = -80; i <= 80; i++) {
            const y = cy + i * step;
            const dy = 602 * slope;
            const d = `M${cx - 602} ${y - dy}L${cx + 602} ${y + dy}M${cx - 602} ${y + dy}L${cx + 602} ${y - dy}`;
            if (i % 5 === 0) major += d; else minor += d;
        }
        document.querySelector('.minor').setAttribute('d', minor);
        document.querySelector('.major').setAttribute('d', major);
    </script>
</body>
</html>
